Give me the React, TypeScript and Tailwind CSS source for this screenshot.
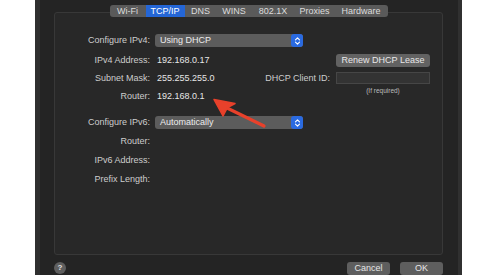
import React from "react"

const tabs = [
  { name: "Wi-Fi", w: "w-[36px]" },
  { name: "TCP/IP", w: "w-[39px]", active: true },
  { name: "DNS", w: "w-[32px]" },
  { name: "WINS", w: "w-[35px]" },
  { name: "802.1X", w: "w-[43px]" },
  { name: "Proxies", w: "w-[40px]" },
  { name: "Hardware", w: "w-[53px]" },
]

function Stepper() {
  return (
    <div className="flex h-full w-[12px] items-center justify-center rounded-[3px] bg-[#2a6ae0]">
      <svg width="7" height="10" viewBox="0 0 7 10" fill="none" stroke="#fff" strokeWidth="1.1" strokeLinecap="round" strokeLinejoin="round">
        <path d="M1.5 3.8 L3.5 1.8 L5.5 3.8" />
        <path d="M1.5 6.2 L3.5 8.2 L5.5 6.2" />
      </svg>
    </div>
  )
}

function Select({ value }: { value: string }) {
  return (
    <div className="flex h-[13px] w-[148px] items-center justify-between rounded-[3px] bg-[#5c5c5c] pl-[5px]">
      <span className="text-[9px] leading-none text-[#ececec]">{value}</span>
      <Stepper />
    </div>
  )
}

function Label({ children }: { children: React.ReactNode }) {
  return <div className="w-[95px] shrink-0 text-right text-[9px] leading-none text-[#cdcdcd]">{children}</div>
}

export default function App() {
  return (
    <div className="relative h-[275px] w-[497px] overflow-hidden bg-white font-['Liberation_Sans',Arial,sans-serif]">
      <div className="ml-[35px] flex h-full w-[427px] flex-col border-l-[5px] border-r-[4px] border-l-[#2f2f2f] border-r-[#303030] bg-[#242424] pl-[14px] pr-[15px] pt-[5px]">
        {/* tab bar */}
        <div className="relative z-10 flex justify-center">
          <div className="flex h-[12px] overflow-hidden rounded-[3px] bg-[#5a5a5a]">
            {tabs.map((t) => (
              <div
                key={t.name}
                className={`${t.w} flex items-center justify-center text-[9px] leading-none ${t.active ? "bg-[#2466d6] text-white" : "text-[#dcdcdc]"}`}
              >
                {t.name}
              </div>
            ))}
          </div>
        </div>

        {/* panel */}
        <div className="-mt-[5px] flex h-[249px] flex-col rounded-[3px] border border-[#383838] bg-[#282828] pr-[12px] pt-[21px]">
          <div className="flex h-[13px] items-center">
            <Label>Configure IPv4:</Label>
            <div className="ml-[5px]">
              <Select value="Using DHCP" />
            </div>
          </div>

          <div className="mt-[4px] flex h-[18px] items-center">
            <Label>IPv4 Address:</Label>
            <div className="ml-[7px] text-[9px] leading-none text-[#e6e6e6]">192.168.0.17</div>
            <div className="ml-auto flex h-[13px] w-[94px] items-center justify-center rounded-[3px] bg-[#626262] text-[9px] leading-none text-[#e8e8e8]">
              Renew DHCP Lease
            </div>
          </div>

          <div className="flex h-[18px] items-center">
            <Label>Subnet Mask:</Label>
            <div className="ml-[7px] text-[9px] leading-none text-[#e6e6e6]">255.255.255.0</div>
            <div className="ml-auto flex items-center gap-[6px]">
              <span className="text-[9px] leading-none text-[#cdcdcd]">DHCP Client ID:</span>
              <div className="h-[12px] w-[94px] border border-[#464646] bg-[#333333]" />
            </div>
          </div>

          <div className="flex h-[19px] items-center">
            <Label>Router:</Label>
            <div className="ml-[7px] text-[9px] leading-none text-[#e6e6e6]">192.168.0.1</div>
            <div className="ml-auto w-[94px] self-start pt-[1px] text-center text-[6.5px] leading-none text-[#bdbdbd]">
              (If required)
            </div>
          </div>

          <div className="mt-[10px] flex h-[13px] items-center">
            <Label>Configure IPv6:</Label>
            <div className="ml-[5px]">
              <Select value="Automatically" />
            </div>
          </div>

          <div className="mt-[3px] flex h-[19px] items-center">
            <Label>Router:</Label>
          </div>
          <div className="flex h-[19px] items-center">
            <Label>IPv6 Address:</Label>
          </div>
          <div className="flex h-[18px] items-center">
            <Label>Prefix Length:</Label>
          </div>
        </div>

        {/* bottom buttons */}
        <div className="mt-[7px] flex items-start">
          <div className="flex h-[12px] w-[12px] items-center justify-center rounded-full bg-[#5e5e5e] text-[8px] font-bold leading-none text-[#e0e0e0]">
            ?
          </div>
          <div className="ml-auto flex gap-[10px]">
            <div className="flex h-[13px] w-[43px] items-center justify-center rounded-[3px] bg-[#5e5e5e] text-[9px] leading-none text-[#e6e6e6]">
              Cancel
            </div>
            <div className="flex h-[13px] w-[43px] items-center justify-center rounded-[3px] bg-[#5e5e5e] text-[9px] leading-none text-[#e6e6e6]">
              OK
            </div>
          </div>
        </div>
      </div>

      {/* red annotation arrow */}
      <svg className="pointer-events-none absolute left-0 top-0" width="497" height="275" viewBox="0 0 497 275">
        <line x1="264" y1="126" x2="225" y2="107" stroke="#e8412b" strokeWidth="3.2" strokeLinecap="round" />
        <path d="M214 99.5 L235 103.5 L227.5 107.5 L223 116 Z" fill="#e8412b" stroke="#e8412b" strokeWidth="1.5" strokeLinejoin="round" />
      </svg>
    </div>
  )
}
